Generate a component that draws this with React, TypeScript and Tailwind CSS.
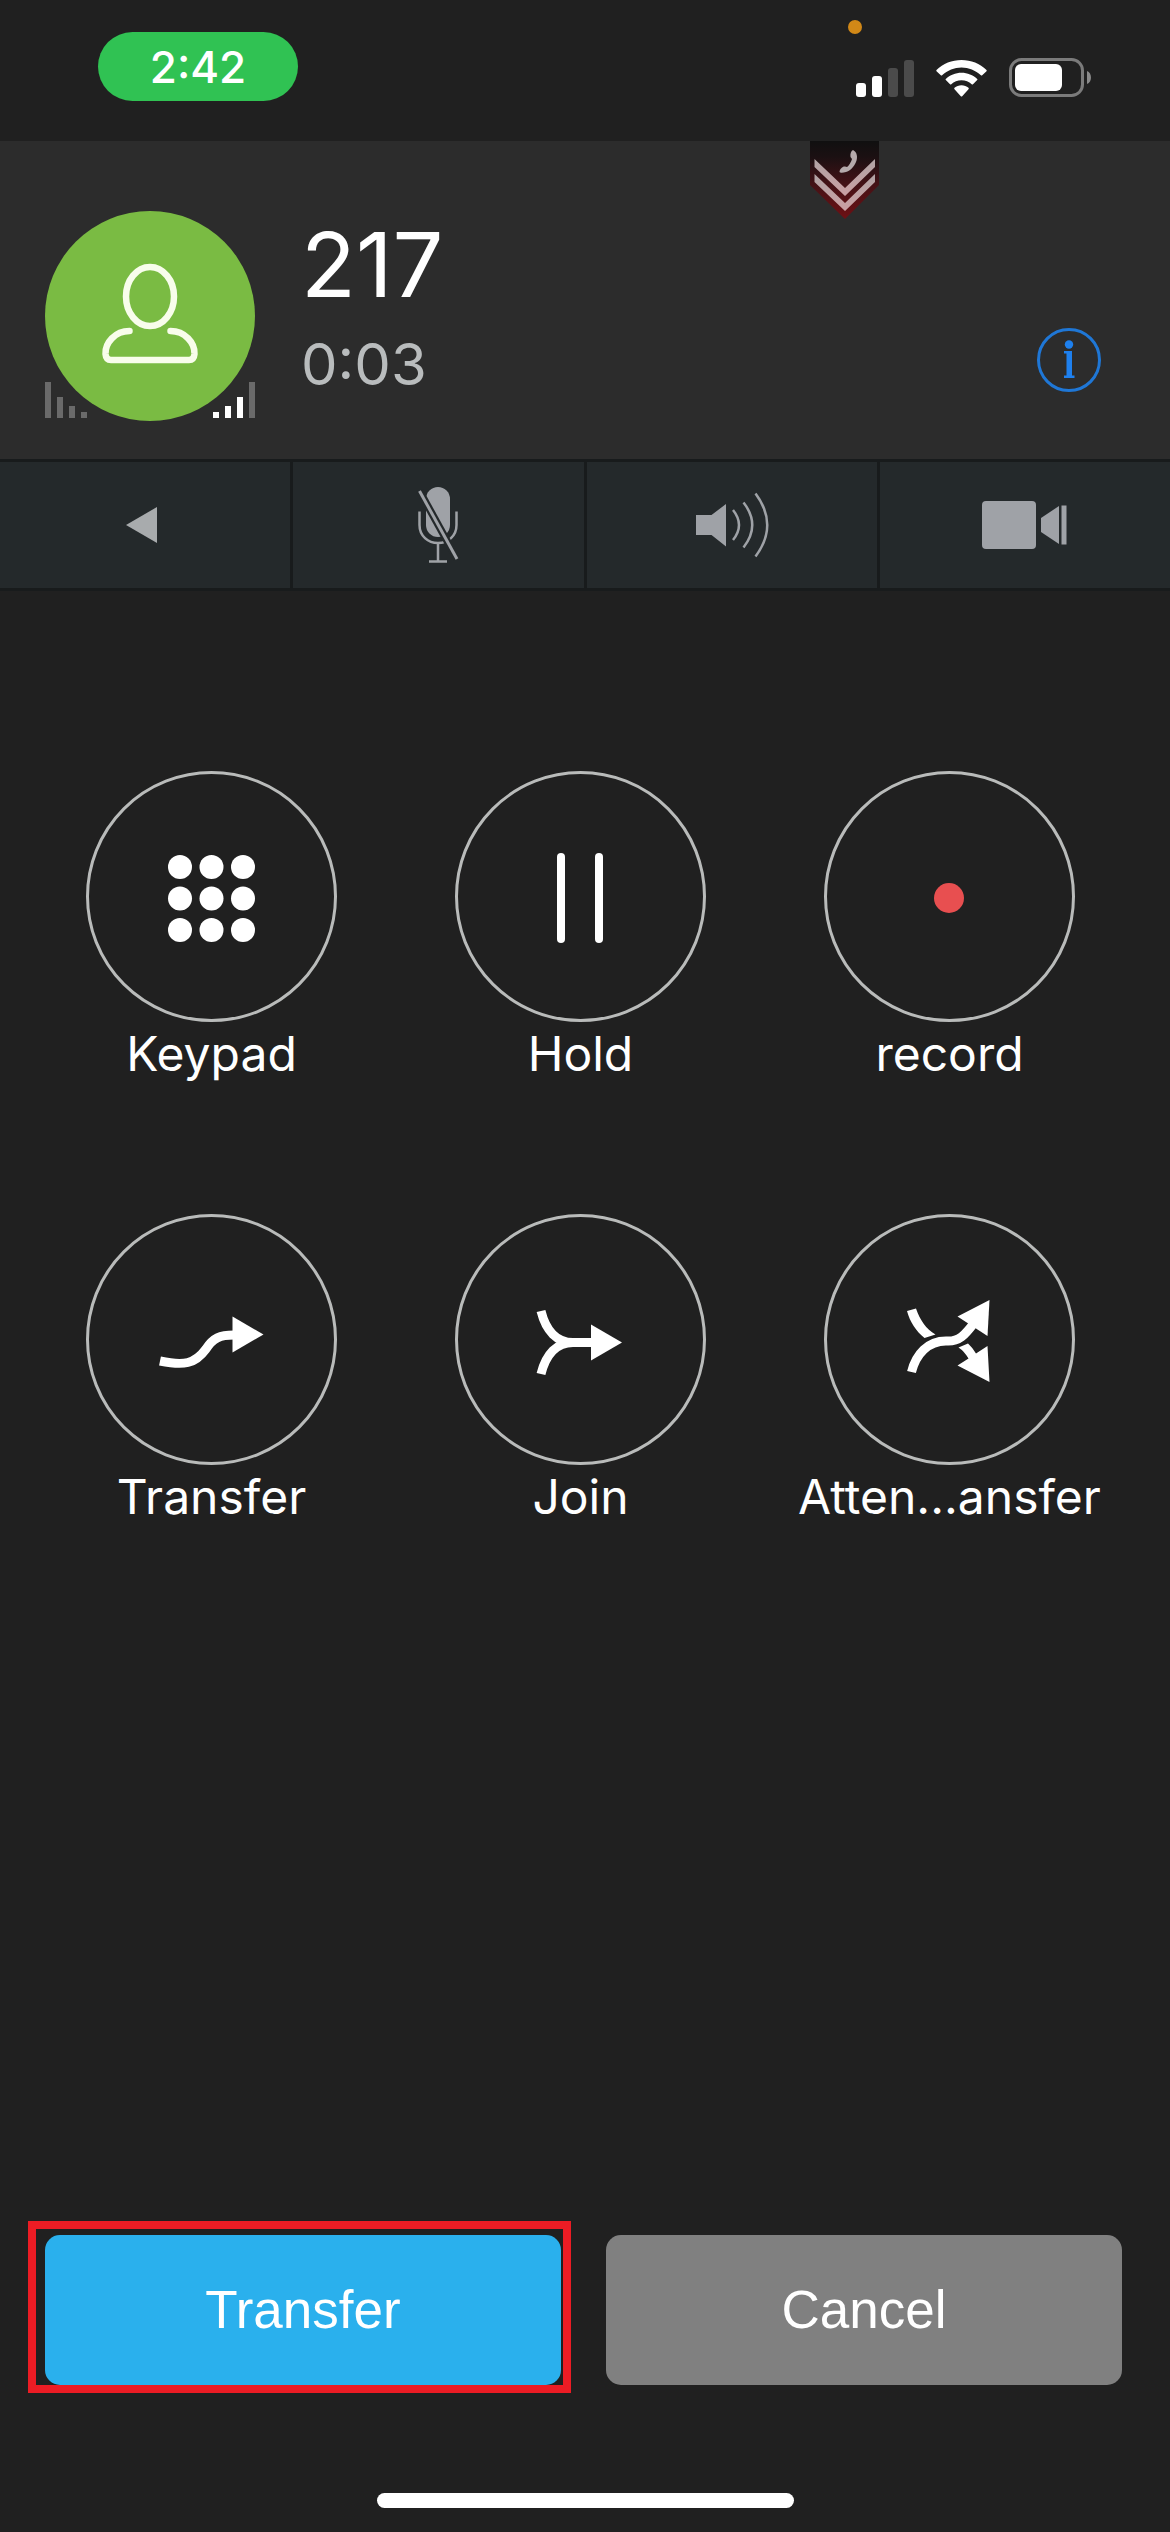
import type { ReactNode } from "react";

function StatusBar() {
  return (
    <div className="relative flex h-[141px] items-start justify-between pt-8 pr-[78px] pl-[98px]">
      <div className="flex h-[69px] w-[200px] items-center justify-center rounded-full bg-[#30c253] text-[44px] leading-none font-medium">
        2:42
      </div>
      <div className="absolute top-5 right-[308px] size-[14px] rounded-full bg-[#d18817]" />
      <div className="mt-[26px] flex items-center">
        <svg className="h-[38px] w-[58px]" viewBox="0 0 58 38" aria-label="Signal">
          <rect x="0" y="24" width="10" height="14" rx="3" fill="#fff" />
          <rect x="16" y="17" width="10" height="21" rx="3" fill="#fff" />
          <rect x="32" y="9" width="10" height="29" rx="3" fill="#4b4b4b" />
          <rect x="48" y="1" width="10" height="37" rx="3" fill="#4b4b4b" />
        </svg>
        <svg className="ml-[22px] h-[38px] w-[51px]" viewBox="0 0 51 38" fill="#fff" aria-label="Wi-Fi">
          <path d="M25.500 1C35 1 44 4.500 50.500 11Q51 11.600 50.500 12.200L46.200 16.300Q45.500 16.900 44.900 16.300C39.500 11.300 32.700 8.500 25.500 8.500S11.500 11.300 6.100 16.300Q5.500 16.900 4.800 16.300L.5 12.200Q0 11.600 .5 11C7 4.500 16 1 25.500 1Z" />
          <path d="M25.500 13.700C31.500 13.700 37 16 41.200 19.900Q41.800 20.500 41.200 21.100L37 25.200Q36.300 25.700 35.700 25.200C33 22.700 29.400 21.200 25.500 21.200S18 22.700 15.300 25.200Q14.700 25.700 14 25.200L9.800 21.100Q9.200 20.500 9.800 19.900C14 16 19.500 13.700 25.500 13.700Z" />
          <path d="M25.500 26.300C28.200 26.300 30.600 27.200 32.500 28.800Q33.200 29.500 32.500 30.200L26.200 37.200Q25.500 37.800 24.800 37.200L18.500 30.200Q17.800 29.500 18.500 28.800C20.400 27.200 22.800 26.300 25.500 26.300Z" />
        </svg>
        <svg className="ml-[22px] h-[39px] w-[83px]" viewBox="0 0 83 39" aria-label="Battery">
          <rect x="1.500" y="1.500" width="72" height="36" rx="11" fill="none" stroke="#7b7b7b" strokeWidth="3" />
          <rect x="6" y="6" width="47" height="27" rx="6" fill="#fff" />
          <path d="M78 13C83.300 15 83.300 24 78 26Z" fill="#8a8a8a" />
        </svg>
      </div>
    </div>
  );
}

function LevelBars({ mirrored = false }: { mirrored?: boolean }) {
  const low = mirrored ? "bg-white" : "bg-[#6a6a6a]";
  return (
    <div
      className={
        mirrored
          ? "absolute right-0 bottom-[3px] flex flex-row-reverse items-end gap-[6px]"
          : "absolute bottom-[3px] left-0 flex items-end gap-[6px]"
      }
    >
      <div className="h-9 w-[6px] bg-[#6a6a6a]" />
      <div className={`h-[21px] w-[6px] ${low}`} />
      <div className={`h-3 w-[6px] ${low}`} />
      <div className={`h-[6px] w-[6px] ${low}`} />
    </div>
  );
}

function CallHeader() {
  return (
    <header className="relative flex h-[318px] items-start bg-[#2c2c2c] pt-[70px] pr-[68px] pl-[45px]">
      <svg className="absolute top-0 right-[291px] h-[78px] w-[69px]" viewBox="0 0 69 78" aria-hidden="true">
        <defs>
          <linearGradient id="badge" x1="0" y1="0" x2="0" y2="1">
            <stop offset="0" stopColor="#101010" />
            <stop offset=".2" stopColor="#1b1012" />
            <stop offset=".55" stopColor="#431216" />
            <stop offset="1" stopColor="#6e1014" />
          </linearGradient>
          <linearGradient id="stripe" x1="0" y1="0" x2="0" y2="1">
            <stop offset="0" stopColor="#b0a3a4" />
            <stop offset="1" stopColor="#cba0a3" />
          </linearGradient>
        </defs>
        <path d="M0 0H69V44L35 78L0 44Z" fill="url(#badge)" />
        <path d="M4.500 18L35 47L65 18V26L35 55L4.500 26Z" fill="url(#stripe)" />
        <path d="M4.500 33L35 62L65 33V41L35 70L4.500 41Z" fill="url(#stripe)" />
        <path d="M43 9C47 11 48 16 46 21C44 26 40 30 36 31C33 32 30 32 29.500 31C29.500 28 33 25 35 25.500L37 26C39 25 41 21 42 18L40.500 16C40 13 41 10 43 9Z" fill="#b5aaab" />
      </svg>
      <div className="relative size-[210px] shrink-0">
        <div className="flex size-full items-center justify-center rounded-full bg-[#7abb43]">
          <svg
            className="size-[210px]"
            viewBox="0 0 210 210"
            fill="none"
            stroke="#f8fdeb"
            strokeWidth="6.500"
            strokeLinecap="round"
            strokeLinejoin="round"
            aria-label="Contact"
          >
            <ellipse cx="105" cy="85.500" rx="24" ry="29.500" />
            <path d="M84.500 120C70 120 60 132 60.500 143Q61 149 66 149H144Q149 149 149.500 143C150 132 140 120 125.500 120" />
          </svg>
        </div>
        <LevelBars />
        <LevelBars mirrored />
      </div>
      <div className="ml-[46px] flex-1 pt-1">
        <h1 className="text-[90px] leading-[100px] font-normal">217</h1>
        <p className="text-[58px] leading-[98px] text-[#b9bcbd]">0:03</p>
      </div>
      <button type="button" aria-label="Call information" className="mt-[116px] size-[66px]">
        <svg viewBox="0 0 66 66" fill="none">
          <circle cx="33" cy="33" r="30.500" stroke="#1f77d6" strokeWidth="3" />
          <circle cx="33" cy="17.500" r="4.200" fill="#1e80ee" />
          <path d="M28 24H36V48.500H38.500V51H28V48.500H30.500V26.500H28Z" fill="#1e80ee" />
        </svg>
      </button>
    </header>
  );
}

function BarButton({ label, children }: { label: string; children: ReactNode }) {
  return (
    <button type="button" aria-label={label} className="flex h-[126px] items-center justify-center bg-[#24292b]">
      <svg className="size-[100px]" viewBox="0 0 100 100" fill="#9fa2a7">
        {children}
      </svg>
    </button>
  );
}

function AudioBar() {
  return (
    <div className="grid grid-cols-4 gap-[3px] border-y-[3px] border-[#181b1c] bg-[#181b1c]">
      <BarButton label="Back">
        <path d="M31 50L62 32V68Z" fill="#a8abad" />
      </BarButton>
      <BarButton label="Mute">
        <rect x="38" y="12" width="24" height="50" rx="12" />
        <path
          d="M31.500 36.500V50C31.500 61 40 68 50 68S68.500 61 68.500 50V36.500M50 68V86M41 86.500H59"
          fill="none"
          stroke="#9fa2a7"
          strokeWidth="2.500"
        />
        <path d="M31.500 16L69 84" stroke="#24292b" strokeWidth="7.500" />
        <path d="M31.500 16L69 84" stroke="#9fa2a7" strokeWidth="3" />
      </BarButton>
      <BarButton label="Speaker">
        <path d="M14 40H29.500L44 29V71.500L29.500 60H14Z" />
        <path
          d="M51 35Q63 50 51 65M61.500 27.500Q79 50 61.500 72.500M73.500 18.500Q97 50 73.500 81.500"
          fill="none"
          stroke="#9fa2a7"
          strokeWidth="2.500"
        />
      </BarButton>
      <BarButton label="Video">
        <rect x="7" y="26" width="54" height="48" rx="4" />
        <path d="M66 43L84 31V69L66 57Z" />
        <rect x="86.500" y="30.500" width="5" height="39" />
      </BarButton>
    </div>
  );
}

function CallAction({ label, children }: { label: string; children: ReactNode }) {
  return (
    <button type="button" className="flex flex-col items-center text-[48px] leading-[64px] whitespace-nowrap">
      <svg
        className="size-[251px] rounded-full border-[3px] border-[#b9bbba]"
        viewBox="3 3 245 245"
        fill="#fff"
        aria-hidden="true"
      >
        {children}
      </svg>
      <span>{label}</span>
    </button>
  );
}

const dotCentres = [94, 125.5, 157];

function CallActions() {
  return (
    <main className="grid grid-cols-3 gap-y-32 pt-45 pr-9 pl-[27px]">
      <CallAction label="Keypad">
        {dotCentres.map((cx) =>
          dotCentres.map((cy) => <circle key={`${cx}-${cy}`} cx={cx} cy={cy + 2} r="12" />),
        )}
      </CallAction>
      <CallAction label="Hold">
        <rect x="102" y="82" width="8" height="90" rx="4" />
        <rect x="140" y="82" width="8" height="90" rx="4" />
      </CallAction>
      <CallAction label="record">
        <circle cx="125" cy="127" r="15" fill="#e84f50" />
      </CallAction>
      <CallAction label="Transfer">
        <path
          d="M74 147C98 152 109 150 120 135C127 124 134 121 148 121"
          fill="none"
          stroke="#fff"
          strokeWidth="9"
        />
        <path d="M146.500 102.500L177.500 120.500L146.500 138.500Z" />
      </CallAction>
      <CallAction label="Join">
        <path
          d="M86 97C91 117 102 128.500 118 128.500H138M86 160C91 140 102 128.500 118 128.500"
          fill="none"
          stroke="#fff"
          strokeWidth="9"
        />
        <path d="M136 110.500L167 128.500L136 146.500Z" />
      </CallAction>
      <CallAction label="Atten...ansfer">
        <path d="M83 97L92 94.500C96 106 102 115 111.500 120.500L100.500 124C92 117 86 108 83 97Z" />
        <path
          d="M87.500 158C92 140 104 127 122 127C135 128 141 121 150 109"
          fill="none"
          stroke="#fff"
          strokeWidth="9"
        />
        <path d="M165.500 86L133.500 102.500L163.500 122Z" />
        <path d="M134.500 133.500L144 129.500Q148 133 152 139.500L163.500 132L165.500 168L133.500 151.500L144.500 144.500Q140 137 134.500 133.500Z" />
      </CallAction>
    </main>
  );
}

export default function App() {
  return (
    <div className="flex min-h-screen flex-col bg-[#202020] font-['Inter',sans-serif] text-white">
      <StatusBar />
      <CallHeader />
      <AudioBar />
      <CallActions />
      <footer className="mt-auto flex flex-col items-center gap-[108px] pt-16 pb-6">
        <div className="grid w-full grid-cols-2 gap-[45px] pr-12 pl-[45px] font-['Liberation_Sans',sans-serif] text-[53px]">
          <div className="relative">
            <button type="button" className="h-[150px] w-full rounded-[15px] bg-[#2ab0ed]">
              Transfer
            </button>
            <div className="pointer-events-none absolute -top-[14px] -right-[10px] -bottom-2 -left-[17px] border-8 border-[#ec1c24]" />
          </div>
          <button type="button" className="h-[150px] rounded-[15px] bg-[#808080]">
            Cancel
          </button>
        </div>
        <div className="h-[15px] w-[417px] rounded-full bg-white" />
      </footer>
    </div>
  );
}
